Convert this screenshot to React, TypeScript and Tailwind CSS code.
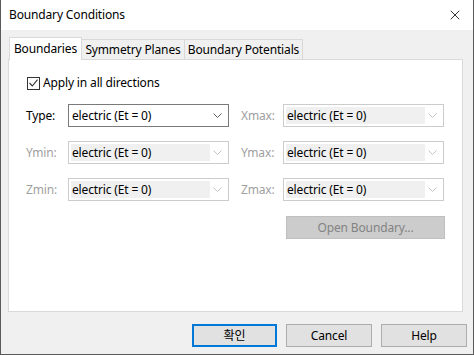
import { X } from 'lucide-react';

const font = { fontFamily: '"Noto Sans", "Noto Sans CJK KR", sans-serif' };

function Chevron({ disabled }: { disabled?: boolean }) {
  return (
    <svg width="9" height="5" viewBox="0 0 9 5" className="shrink-0">
      <path
        d="M0.5 0.5 L4.5 4.5 L8.5 0.5"
        fill="none"
        stroke={disabled ? '#c4c4c4' : '#606060'}
        strokeWidth="1"
      />
    </svg>
  );
}

function Combo({ disabled }: { disabled?: boolean }) {
  if (disabled) {
    return (
      <div className="flex h-[23px] w-[161px] items-center border border-[#cccccc] bg-white p-[2px] pr-[6px]">
        <div className="flex h-full w-[139px] items-center bg-[#f0f0f0] pl-[1px] text-[12px] tracking-[-0.15px] text-black">
          electric (Et = 0)
        </div>
        <div className="flex flex-1 justify-end">
          <Chevron disabled />
        </div>
      </div>
    );
  }
  return (
    <div className="flex h-[23px] w-[161px] items-center justify-between border border-[#7a7a7a] bg-white pl-[3px] pr-[6px] text-[12px] tracking-[-0.15px] text-black">
      <span>electric (Et = 0)</span>
      <Chevron />
    </div>
  );
}

function Field({ label, disabled }: { label: string; disabled?: boolean }) {
  return (
    <div className="flex items-center">
      <span
        className={`w-[42px] text-[12px] ${disabled ? 'text-[#a0a0a0]' : 'text-black'}`}
      >
        {label}
      </span>
      <Combo disabled={disabled} />
    </div>
  );
}

export default function App() {
  return (
    <div
      className="flex h-[355px] w-[474px] flex-col border-x border-b border-[#5a5a5a] bg-[#f0f0f0] tracking-[-0.15px]"
      style={font}
    >
      <header className="flex h-[30px] shrink-0 items-center justify-between bg-white pl-[8px] pr-[10px]">
        <span className="text-[12px] text-black">Boundary Conditions</span>
        <X size={16} strokeWidth={1.2} className="text-black" />
      </header>

      <div className="flex flex-1 flex-col pl-[7px] pr-[9px] pt-[7px]">
        <div className="flex items-end pl-[1px]">
          <div className="relative z-10 -mb-px flex h-[23px] w-[73px] items-center justify-center border border-b-0 border-[#d9d9d9] bg-white text-[12px]">
            Boundaries
          </div>
          <div className="flex h-[20px] w-[103px] items-center justify-center border border-l-0 border-b-0 border-[#d9d9d9] text-[12px]">
            Symmetry Planes
          </div>
          <div className="flex h-[20px] w-[118px] items-center justify-center border border-l-0 border-b-0 border-[#d9d9d9] text-[12px]">
            Boundary Potentials
          </div>
        </div>

        <div className="flex h-[253px] w-[455px] flex-col border border-[#d9d9d9] bg-white pl-[17px] pt-[14px]">
          <label className="ml-[1px] flex items-center gap-[3px] text-[12px] text-black">
            <span className="flex h-[13px] w-[13px] items-center justify-center border border-[#333333] bg-white">
              <svg width="9" height="8" viewBox="0 0 9 8">
                <path d="M0.5 4 L3.3 7 L8.5 0.7" fill="none" stroke="#333" strokeWidth="1.1" />
              </svg>
            </span>
            Apply in all directions
          </label>

          <div className="mt-[12px] grid grid-cols-[215px_auto] gap-y-[14px]">
            <Field label="Type:" />
            <Field label="Xmax:" disabled />
            <Field label="Ymin:" disabled />
            <Field label="Ymax:" disabled />
            <Field label="Zmin:" disabled />
            <Field label="Zmax:" disabled />
          </div>

          <div className="mt-[15px] flex pl-[260px]">
            <div className="flex h-[23px] w-[159px] items-center justify-center border border-[#bfbfbf] bg-[#cccccc] text-[12px] text-[#838383]">
              Open Boundary...
            </div>
          </div>
        </div>

        <div className="mt-[12px] flex justify-end gap-[9px]">
          <button className="flex h-[23px] w-[85px] items-center justify-center border-2 border-[#0078d7] bg-[#e1e1e1] text-[12px] text-black">
            확인
          </button>
          <button className="flex h-[23px] w-[86px] items-center justify-center border border-[#adadad] bg-[#e1e1e1] text-[12px] text-black">
            Cancel
          </button>
          <button className="-mr-[3px] flex h-[23px] w-[86px] items-center justify-center border border-[#adadad] bg-[#e1e1e1] text-[12px] text-black">
            Help
          </button>
        </div>
      </div>
    </div>
  );
}
